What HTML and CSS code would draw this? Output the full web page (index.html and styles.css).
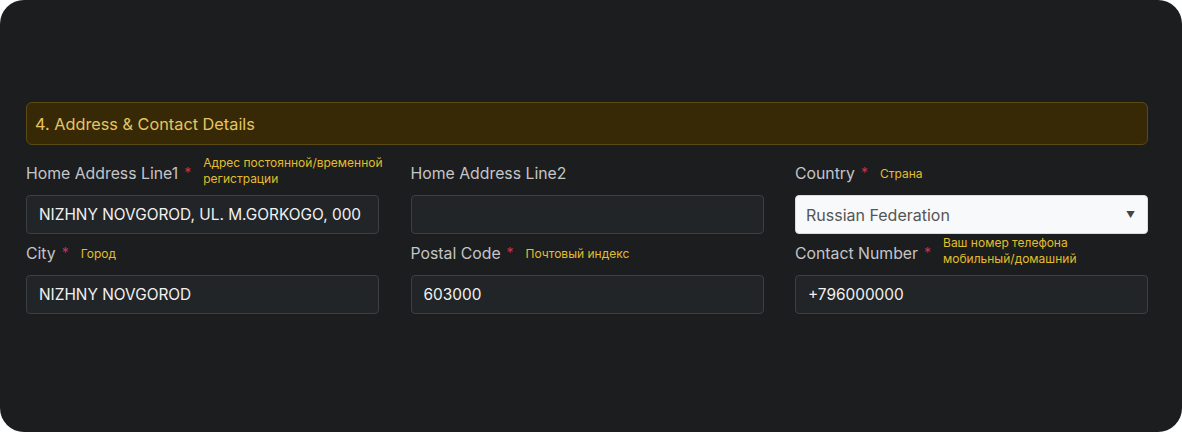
FILE: index.html
```html
<!DOCTYPE html>
<html>
  <head>
    <title>Address &amp; Contact Details</title>
    <meta charset='utf-8'>
    <link rel="stylesheet" href="styles.css">
  </head>
  <body>
    <div id='card'>
      <div class='section-head'>4. Address &amp; Contact Details</div>
      <div class='fields'>
        <div class='field'>
          <div class='label-row'>
            <span class='label'>Home Address Line1</span>
            <span class='req'>*</span>
            <span class='hint'>Адрес постоянной/временной<br>регистрации</span>
          </div>
          <input class='box' type='text' value='NIZHNY NOVGOROD, UL. M.GORKOGO, 000'>
        </div>
        <div class='field'>
          <div class='label-row'>
            <span class='label'>Home Address Line2</span>
          </div>
          <input class='box' type='text' value=''>
        </div>
        <div class='field'>
          <div class='label-row'>
            <span class='label'>Country</span>
            <span class='req'>*</span>
            <span class='hint one'>Страна</span>
          </div>
          <div class='box select'>
            <span>Russian Federation</span>
            <span class='caret'>&#9660;</span>
          </div>
        </div>
        <div class='field'>
          <div class='label-row'>
            <span class='label'>City</span>
            <span class='req'>*</span>
            <span class='hint one'>Город</span>
          </div>
          <input class='box' type='text' value='NIZHNY NOVGOROD'>
        </div>
        <div class='field'>
          <div class='label-row'>
            <span class='label'>Postal Code</span>
            <span class='req'>*</span>
            <span class='hint one'>Почтовый индекс</span>
          </div>
          <input class='box' type='text' value='603000'>
        </div>
        <div class='field'>
          <div class='label-row'>
            <span class='label'>Contact Number</span>
            <span class='req'>*</span>
            <span class='hint'>Ваш номер телефона<br>мобильный/домашний</span>
          </div>
          <input class='box' type='text' value='+796000000'>
        </div>
      </div>
    </div>
  </body>
</html>
```

FILE: styles.css
```css
body {
  font-family: Inter, "DejaVu Sans", sans-serif;
  background: #fff;
  margin: 0;
  padding: 0;
}

#card {
  width: 1182px;
  height: 432px;
  box-sizing: border-box;
  background: #1c1d1f;
  border-radius: 24px;
  padding: 102px 34px 0 26px;
}

.section-head {
  height: 43px;
  box-sizing: border-box;
  display: flex;
  align-items: center;
  padding-left: 8px;
  background: #372905;
  border: 1px solid #5b4a12;
  border-radius: 6px;
  color: #e4c562;
  font-size: 16.3px;
}
/* Form grid. */
.fields {
  display: grid;
  grid-template-columns: repeat(3, minmax(0, 1fr));
  column-gap: 31.5px;
  row-gap: 1px;
  margin-top: 10px;
}
.label-row {
  display: flex;
  align-items: center;
  min-height: 32px;
  margin-bottom: 8px;
  white-space: nowrap;
}
.label {
  flex-shrink: 0;
  color: #c4c5c7;
  font-size: 15.8px;
  padding-top: 5px;
}
.req {
  flex-shrink: 0;
  color: #c8334f;
  font-size: 14px;
  margin-left: 6px;
  padding-top: 3px;
}
.hint {
  flex-shrink: 0;
  color: #e2bd2c;
  font-size: 12px;
  line-height: 16px;
  margin-left: 12px;
}
.hint.one {
  padding-top: 5px;
}
.box {
  display: block;
  width: 100%;
  height: 39px;
  box-sizing: border-box;
  margin: 0;
  padding: 0 12px;
  background: #222528;
  border: 1px solid #3d4043;
  border-radius: 4px;
  color: #f1f1f1;
  font-family: Inter, "DejaVu Sans", sans-serif;
  font-size: 15.4px;
  outline: none;
}
.select {
  display: flex;
  align-items: center;
  justify-content: space-between;
  padding: 0 11px 0 10px;
  background: #f8f9fa;
  border-color: #dcdcdc;
  color: #555;
  font-size: 16px;
}
.caret {
  font-size: 9px;
  color: #444;
  margin-right: 1px;
}
```
